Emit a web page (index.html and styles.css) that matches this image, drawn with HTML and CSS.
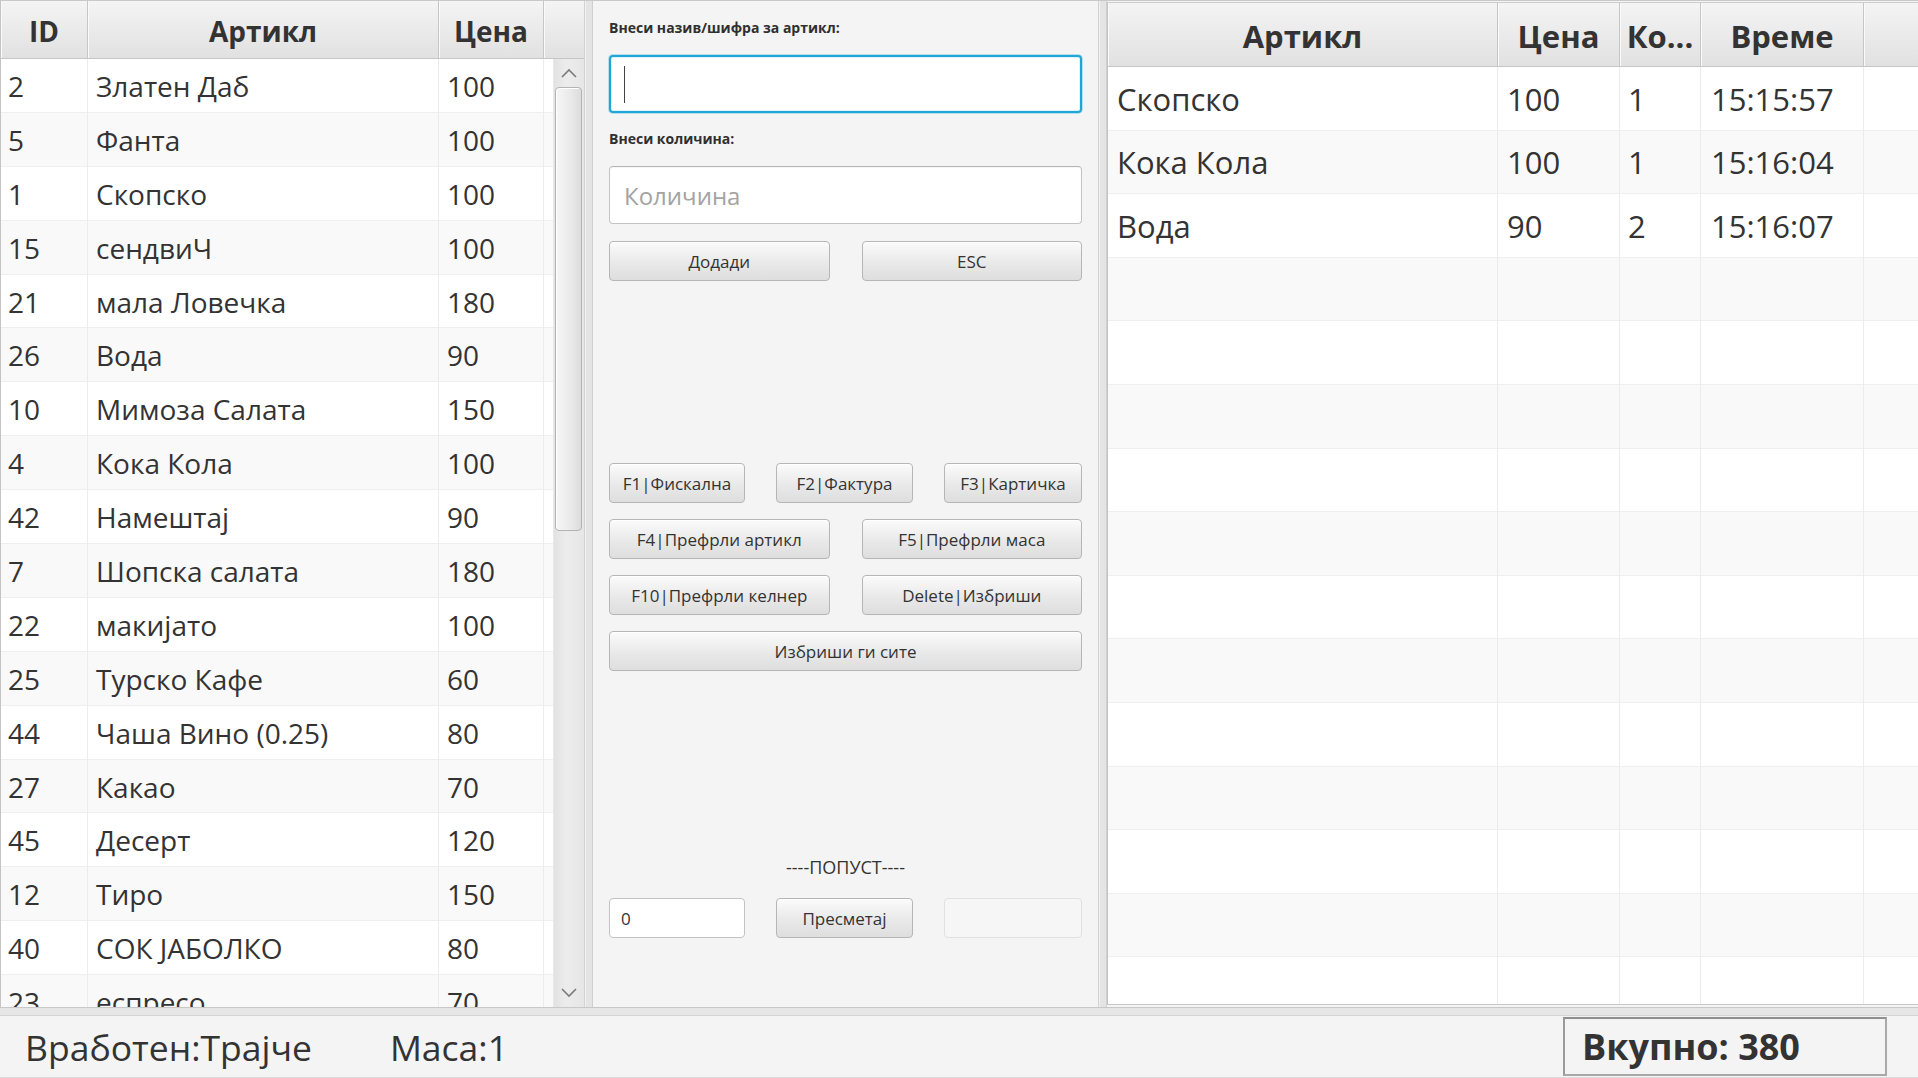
FILE: index.html
```html
<!DOCTYPE html>
<html lang="mk">
<head>
<meta charset="utf-8">
<title>Каса</title>
<link rel="stylesheet" href="styles.css">
</head>
<body>
<div class="app">
  <div class="main">
    <section class="left">
      <div class="lhead">
        <div class="hcell">ID</div>
        <div class="hcell">Артикл</div>
        <div class="hcell">Цена</div>
        <div class="hcell filler"></div>
      </div>
      <div class="lbody">
        <div class="lrows">
          <div class="lrow"><div class="cell">2</div><div class="cell">Златен Даб</div><div class="cell">100</div><div class="cell"></div></div>
          <div class="lrow"><div class="cell">5</div><div class="cell">Фанта</div><div class="cell">100</div><div class="cell"></div></div>
          <div class="lrow"><div class="cell">1</div><div class="cell">Скопско</div><div class="cell">100</div><div class="cell"></div></div>
          <div class="lrow"><div class="cell">15</div><div class="cell">сендвиЧ</div><div class="cell">100</div><div class="cell"></div></div>
          <div class="lrow"><div class="cell">21</div><div class="cell">мала Ловечка</div><div class="cell">180</div><div class="cell"></div></div>
          <div class="lrow"><div class="cell">26</div><div class="cell">Вода</div><div class="cell">90</div><div class="cell"></div></div>
          <div class="lrow"><div class="cell">10</div><div class="cell">Мимоза Салата</div><div class="cell">150</div><div class="cell"></div></div>
          <div class="lrow"><div class="cell">4</div><div class="cell">Кока Кола</div><div class="cell">100</div><div class="cell"></div></div>
          <div class="lrow"><div class="cell">42</div><div class="cell">Намештај</div><div class="cell">90</div><div class="cell"></div></div>
          <div class="lrow"><div class="cell">7</div><div class="cell">Шопска салата</div><div class="cell">180</div><div class="cell"></div></div>
          <div class="lrow"><div class="cell">22</div><div class="cell">макијато</div><div class="cell">100</div><div class="cell"></div></div>
          <div class="lrow"><div class="cell">25</div><div class="cell">Турско Кафе</div><div class="cell">60</div><div class="cell"></div></div>
          <div class="lrow"><div class="cell">44</div><div class="cell">Чаша Вино (0.25)</div><div class="cell">80</div><div class="cell"></div></div>
          <div class="lrow"><div class="cell">27</div><div class="cell">Какао</div><div class="cell">70</div><div class="cell"></div></div>
          <div class="lrow"><div class="cell">45</div><div class="cell">Десерт</div><div class="cell">120</div><div class="cell"></div></div>
          <div class="lrow"><div class="cell">12</div><div class="cell">Тиро</div><div class="cell">150</div><div class="cell"></div></div>
          <div class="lrow"><div class="cell">40</div><div class="cell">СОК ЈАБОЛКО</div><div class="cell">80</div><div class="cell"></div></div>
          <div class="lrow"><div class="cell">23</div><div class="cell">еспресо</div><div class="cell">70</div><div class="cell"></div></div>
        </div>
        <div class="vscroll">
          <div class="arrow up"><svg width="16" height="10" viewBox="0 0 16 10"><polyline points="1,9 8,2 15,9" fill="none" stroke="#7b7b7b" stroke-width="1.6"/></svg></div>
          <div class="thumb"></div>
          <div class="arrow down"><svg width="16" height="10" viewBox="0 0 16 10"><polyline points="1,1 8,8 15,1" fill="none" stroke="#7b7b7b" stroke-width="1.6"/></svg></div>
        </div>
      </div>
    </section>

    <div class="vdivider"></div>

    <section class="middle">
      <div class="lbl lbl1">Внеси назив/шифра за артикл:</div>
      <div class="field focused"><span class="caret"></span></div>
      <div class="lbl lbl2">Внеси количина:</div>
      <div class="field qty"><span class="ph">Количина</span></div>
      <div class="btnrow two first">
        <div class="btn">Додади</div>
        <div class="btn">ESC</div>
      </div>
      <div class="btnrow three fkeys">
        <div class="btn">F1|Фискална</div>
        <div class="btn">F2|Фактура</div>
        <div class="btn">F3|Картичка</div>
      </div>
      <div class="btnrow two">
        <div class="btn">F4|Префрли артикл</div>
        <div class="btn">F5|Префрли маса</div>
      </div>
      <div class="btnrow two">
        <div class="btn">F10|Префрли келнер</div>
        <div class="btn">Delete|Избриши</div>
      </div>
      <div class="btnrow one">
        <div class="btn">Избриши ги сите</div>
      </div>
      <div class="popust">----ПОПУСТ----</div>
      <div class="btnrow three disc">
        <div class="small-field">0</div>
        <div class="btn">Пресметај</div>
        <div class="small-field disabled"></div>
      </div>
    </section>

    <div class="vdivider"></div>

    <section class="right">
      <div class="rtable">
        <div class="rhead">
          <div class="hcell">Артикл</div>
          <div class="hcell">Цена</div>
          <div class="hcell">Ко...</div>
          <div class="hcell">Време</div>
          <div class="hcell filler"></div>
        </div>
        <div class="rrows">
          <div class="rrow"><div class="cell">Скопско</div><div class="cell">100</div><div class="cell">1</div><div class="cell">15:15:57</div><div class="cell"></div></div>
          <div class="rrow"><div class="cell">Кока Кола</div><div class="cell">100</div><div class="cell">1</div><div class="cell">15:16:04</div><div class="cell"></div></div>
          <div class="rrow"><div class="cell">Вода</div><div class="cell">90</div><div class="cell">2</div><div class="cell">15:16:07</div><div class="cell"></div></div>
          <div class="rrow"><div class="cell"></div><div class="cell"></div><div class="cell"></div><div class="cell"></div><div class="cell"></div></div>
          <div class="rrow"><div class="cell"></div><div class="cell"></div><div class="cell"></div><div class="cell"></div><div class="cell"></div></div>
          <div class="rrow"><div class="cell"></div><div class="cell"></div><div class="cell"></div><div class="cell"></div><div class="cell"></div></div>
          <div class="rrow"><div class="cell"></div><div class="cell"></div><div class="cell"></div><div class="cell"></div><div class="cell"></div></div>
          <div class="rrow"><div class="cell"></div><div class="cell"></div><div class="cell"></div><div class="cell"></div><div class="cell"></div></div>
          <div class="rrow"><div class="cell"></div><div class="cell"></div><div class="cell"></div><div class="cell"></div><div class="cell"></div></div>
          <div class="rrow"><div class="cell"></div><div class="cell"></div><div class="cell"></div><div class="cell"></div><div class="cell"></div></div>
          <div class="rrow"><div class="cell"></div><div class="cell"></div><div class="cell"></div><div class="cell"></div><div class="cell"></div></div>
          <div class="rrow"><div class="cell"></div><div class="cell"></div><div class="cell"></div><div class="cell"></div><div class="cell"></div></div>
          <div class="rrow"><div class="cell"></div><div class="cell"></div><div class="cell"></div><div class="cell"></div><div class="cell"></div></div>
          <div class="rrow"><div class="cell"></div><div class="cell"></div><div class="cell"></div><div class="cell"></div><div class="cell"></div></div>
          <div class="rrow"><div class="cell"></div><div class="cell"></div><div class="cell"></div><div class="cell"></div><div class="cell"></div></div>
        </div>
      </div>
    </section>
  </div>

  <div class="hdivider"></div>

  <footer class="bottom">
    <div class="info">Вработен:Трајче</div>
    <div class="info masa">Маса:1</div>
    <div class="total">Вкупно: 380</div>
  </footer>
</div>
</body>
</html>
```

FILE: styles.css
```css
* { box-sizing: border-box; }

html, body {
  margin: 0;
  padding: 0;
}

body {
  width: 1918px;
  height: 1078px;
  overflow: hidden;
  background: #f4f4f4;
  color: #333333;
  font-family: "Open Sans", "Noto Sans", sans-serif;
}

.app {
  display: flex;
  flex-direction: column;
  height: 1078px;
}

.main {
  display: flex;
  height: 1007px;
  border-top: 1px solid #c9c9c9;
}

/* ---------- left table ---------- */
.left {
  width: 584px;
  display: flex;
  flex-direction: column;
  border-left: 1px solid #c4c4c4;
  background: #ffffff;
}

.lhead {
  display: grid;
  grid-template-columns: 87px 351px 105px 40px;
  height: 58px;
  flex: none;
}

.hcell {
  display: flex;
  align-items: center;
  justify-content: center;
  font-weight: 700;
  background: linear-gradient(#f4f4f4, #e1e1e1);
  border-right: 1px solid #c6c6c6;
  border-bottom: 1px solid #c6c6c6;
  box-shadow: inset 1px 0 0 #fafafa;
  white-space: nowrap;
  overflow: hidden;
}

.lhead .hcell { font-size: 28px; padding-top: 3px; }
.hcell.filler { border-right: none; }

.lbody {
  flex: 1;
  display: flex;
  min-height: 0;
}

.lrows {
  width: 552px;
  overflow: hidden;
}

.lrow {
  display: grid;
  grid-template-columns: 87px 351px 105px 9px;
  height: 53.9px;
  font-size: 28px;
  background: #ffffff;
}

.lrow:nth-child(even) { background: #f9f9f9; }

.lrow .cell {
  display: flex;
  align-items: center;
  padding-left: 7px;
  padding-top: 1px;
  border-right: 1px solid #ececec;
  border-bottom: 1px solid #efefef;
  white-space: nowrap;
  overflow: hidden;
}

.lrow .cell:nth-child(2),
.lrow .cell:nth-child(3) { padding-left: 8px; }
.lrow .cell:last-child { border-right: none; padding: 0; }

.vscroll {
  width: 31px;
  display: flex;
  flex-direction: column;
  background: linear-gradient(to right, #e2e2e2, #ececec 40%, #e6e6e6);
  border-left: 1px solid #e9e9e9;
}

.arrow {
  height: 28px;
  flex: none;
  display: flex;
  align-items: center;
  justify-content: center;
}

.arrow.down { margin-top: auto; }

.thumb {
  height: 444px;
  margin: 0 2px 0 1px;
  border: 1px solid #b3b3b3;
  border-radius: 4px;
  background: linear-gradient(to right, #f6f6f6, #e9e9e9 60%, #dcdcdc);
  box-shadow: inset 1px 1px 0 #ffffff;
}

/* ---------- dividers ---------- */
.vdivider {
  width: 9px;
  flex: none;
  background: #e4e4e4;
  border-left: 1px solid #d2d2d2;
  border-right: 1px solid #cfcfcf;
  box-shadow: inset 1px 0 0 #f2f2f2;
}

.hdivider {
  height: 9px;
  flex: none;
  background: #e6e6e6;
  border-top: 1px solid #c8c8c8;
  border-bottom: 1px solid #d4d4d4;
}

/* ---------- middle panel ---------- */
.middle {
  width: 505px;
  flex: none;
  padding: 15px 16px 0 16px;
  display: flex;
  flex-direction: column;
  background: #f4f4f4;
}

.lbl {
  font-size: 14px;
  font-weight: 700;
  line-height: 24px;
  color: #2f2f2f;
}

.lbl2 { margin-top: 14px; }

.field {
  height: 58px;
  margin-top: 15px;
  background: #ffffff;
  border: 1px solid #c3c3c3;
  border-top-color: #b6b6b6;
  border-radius: 4px;
  display: flex;
  align-items: center;
  padding-left: 14px;
  box-shadow: inset 0 1px 1px rgba(0,0,0,0.04);
}

.field.focused {
  border: 2px solid #1fa6d8;
  box-shadow: 0 0 0 1px rgba(3,158,211,0.25), inset 0 0 0 1px rgba(3,158,211,0.12);
  padding-left: 13px;
}

.caret {
  width: 1px;
  height: 37px;
  background: #444444;
}

.field.qty { margin-top: 15px; }

.ph {
  font-size: 24px;
  color: #a3a3a3;
}

.btnrow {
  display: grid;
  gap: 32px;
  margin-top: 16px;
  height: 40px;
}

.btnrow.two { grid-template-columns: 1fr 1fr; }
.btnrow.three { grid-template-columns: 136px 137px 138px; gap: 31px; }
.btnrow.one { grid-template-columns: 1fr; }

.btnrow.first { margin-top: 17px; }
.btnrow.fkeys { margin-top: 182px; }

.btn {
  display: flex;
  align-items: center;
  justify-content: center;
  font-size: 17px;
  color: #333333;
  background: linear-gradient(#fbfbfb, #e9e9e9 55%, #dedede);
  border: 1px solid #b6b6b6;
  border-radius: 4px;
  box-shadow: inset 0 1px 0 #ffffff;
  white-space: nowrap;
}

.popust {
  margin-top: 183px;
  text-align: center;
  font-size: 18px;
  line-height: 26px;
  color: #333333;
}

.btnrow.disc { margin-top: 18px; }

.small-field {
  display: flex;
  align-items: center;
  padding-left: 11px;
  font-size: 17px;
  background: #ffffff;
  border: 1px solid #c3c3c3;
  border-radius: 4px;
}

.small-field.disabled {
  background: #f6f6f6;
  border-color: #e1e1e1;
}

/* ---------- right table ---------- */
.right {
  flex: 1;
  display: flex;
  flex-direction: column;
  padding: 1px 0 2px 0;
  background: #f4f4f4;
}

.rtable {
  flex: 1;
  display: flex;
  flex-direction: column;
  background: #ffffff;
  border-left: 1px solid #c4c4c4;
  border-top: 1px solid #cdcdcd;
  border-bottom: 1px solid #c8c8c8;
  overflow: hidden;
}

.rhead {
  display: grid;
  grid-template-columns: 390px 122px 81px 163px 1fr;
  height: 64px;
  flex: none;
}

.rhead .hcell { font-size: 31px; padding-top: 2px; }

.rrows { flex: 1; overflow: hidden; }

.rrow {
  display: grid;
  grid-template-columns: 390px 122px 81px 163px 1fr;
  height: 63.6px;
  font-size: 31px;
  background: #ffffff;
}

.rrow:nth-child(even) { background: #f9f9f9; }

.rrow .cell {
  display: flex;
  align-items: center;
  padding-left: 9px;
  padding-top: 1px;
  border-right: 1px solid #ececec;
  border-bottom: 1px solid #efefef;
  white-space: nowrap;
  overflow: hidden;
}

.rrow .cell:nth-child(3) { padding-left: 8px; }
.rrow .cell:nth-child(4) { padding-left: 10px; }
.rrow .cell:last-child { border-right: none; }

/* ---------- bottom bar ---------- */
.bottom {
  flex: 1;
  display: flex;
  align-items: center;
  padding-left: 25px;
  background: #f4f4f4;
  border-bottom: 1px solid #dcdcdc;
}

.info {
  font-size: 35.5px;
  color: #333333;
  white-space: nowrap;
}

.masa { margin-left: 78px; }

.total {
  margin-left: auto;
  margin-right: 31px;
  width: 324px;
  height: 59px;
  display: flex;
  align-items: center;
  padding-left: 17px;
  font-size: 36px;
  font-weight: 700;
  border: 2px solid #a9a9a9;
  border-top-color: #8f8f8f;
  border-left-color: #9a9a9a;
  background: #f4f4f4;
  white-space: nowrap;
}
```
